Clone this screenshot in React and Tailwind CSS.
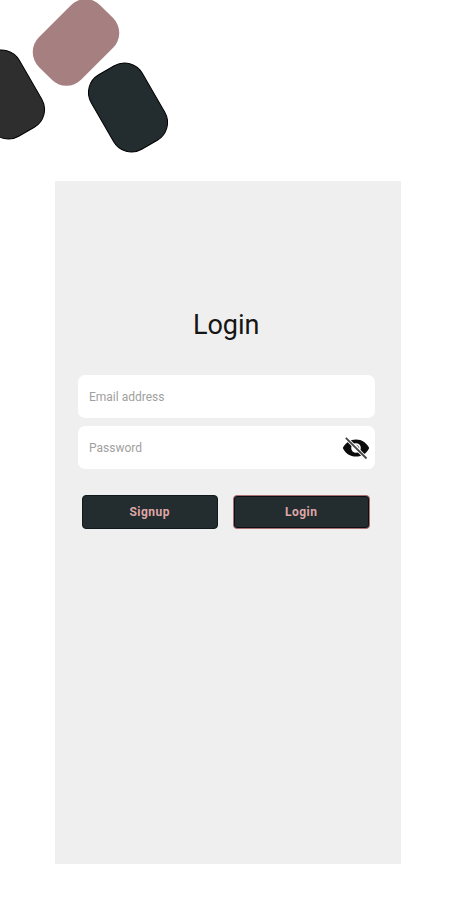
import React from 'react';

const TextField = ({ placeholder, type = 'text', children }) => (
  <div className="flex h-[43px] items-center rounded-[7px] bg-white pl-[11px] pr-[5px]">
    <input
      type={type}
      placeholder={placeholder}
      className="min-w-0 flex-1 bg-transparent text-[12px] leading-[16px] text-black outline-none placeholder:text-[#a0a0a0]"
    />
    {children}
  </div>
);

const HiddenEyeIcon = () => (
  <svg width="28" height="26" viewBox="0 0 28 26" className="shrink-0">
    <path
      fillRule="evenodd"
      d="M0.800 13C3.500 7.400 8.200 4.400 14 4.400S24.500 7.400 27.200 13C24.500 18.600 19.800 21.600 14 21.600S3.500 18.600 0.800 13ZM14 8.200A4.800 4.800 0 1 0 14 17.800A4.800 4.800 0 1 0 14 8.200Z"
      fill="#0c0c0c"
    />
    <path d="M14.500 10.200A3 3 0 0 1 17 13.200" stroke="#777" strokeWidth="1" fill="none" />
    <path d="M3.500 2.500L24.500 23.500" stroke="#fff" strokeWidth="3.800" />
    <path d="M3.800 2.800L24.500 23.500" stroke="#444" strokeWidth="1.800" />
  </svg>
);

const Shapes = () => (
  <div className="pointer-events-none absolute inset-0 overflow-hidden">
    <div className="absolute left-[-25.500px] top-[51px] h-[87px] w-[60px] -rotate-[30deg] rounded-[21px] border border-black bg-[#2f2e2e]" />
    <div className="absolute left-[46.200px] top-[-0.600px] h-[87px] w-[60px] rotate-45 rounded-[21px] bg-[#a67f80]" />
    <div className="absolute left-[98px] top-[63.800px] h-[87px] w-[60px] -rotate-[30deg] rounded-[21px] border border-black bg-[#232c2f]" />
  </div>
);

export default function App() {
  const [showPassword, setShowPassword] = React.useState(false);

  return (
    <div className="relative h-[900px] w-[454px] overflow-hidden bg-white pl-[55px] pt-[181px] font-['Roboto',sans-serif]">
      <Shapes />
      <div className="h-[683px] w-[346.400px] bg-[#efefef] pl-[23px] pr-[26px] pt-[127px]">
        <h1 className="-ml-px text-center text-[27px] leading-[34px] text-[#151515]">Login</h1>
        <div className="mt-[33px] flex flex-col gap-2">
          <TextField placeholder="Email address" />
          <TextField placeholder="Password" type={showPassword ? 'text' : 'password'}>
            <button onClick={() => setShowPassword(!showPassword)}>
              <HiddenEyeIcon />
            </button>
          </TextField>
        </div>
        <div className="mt-[26px] flex gap-[15px] pl-1 pr-[5.500px] text-[12px] font-bold tracking-[0.5px] text-[#dfa6a6]">
          <button className="h-[34px] flex-1 rounded-[4px] border border-[#101a1c] bg-[#232c2f] pr-px">Signup</button>
          <button className="h-[34px] flex-1 rounded-[4px] border border-[#a96f72] bg-[#232c2f] pr-px shadow-[inset_0_0_0_1px_#0c1012]">Login</button>
        </div>
      </div>
    </div>
  );
}
